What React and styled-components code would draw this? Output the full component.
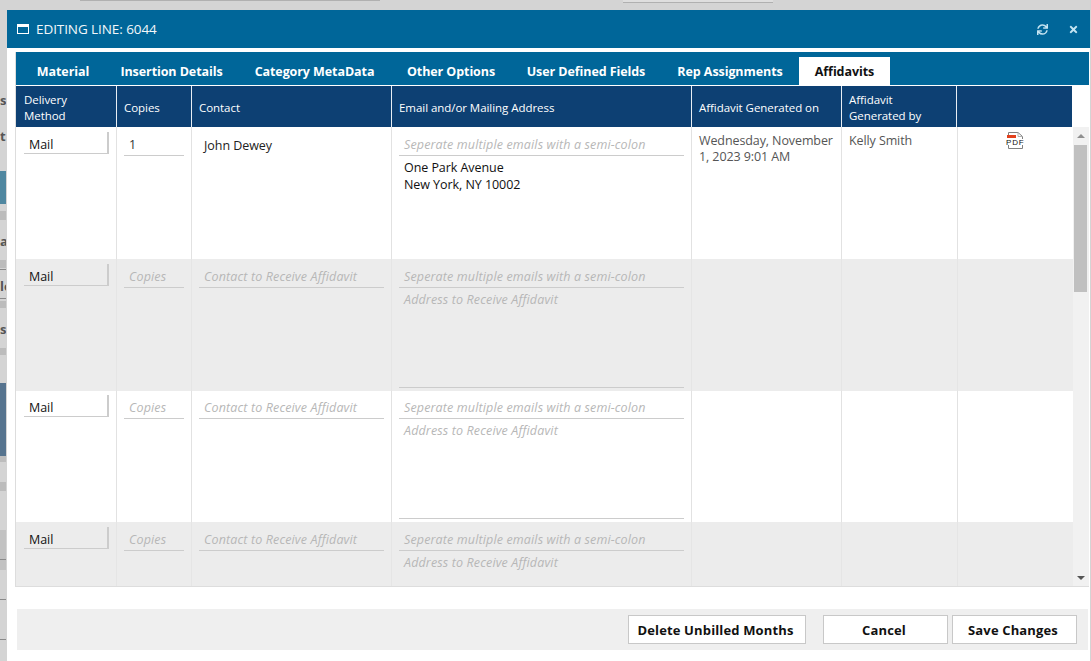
import React from "react";
import styled, { createGlobalStyle } from "styled-components";
import { FaSync, FaTimes } from "react-icons/fa";

const Global = createGlobalStyle`
  html, body { margin: 0; padding: 0; height: 100%; overflow: hidden; background: #d4d4d4; }
  #root { height: 100%; }
  * { box-sizing: border-box; }
`;

const FONT = `"Open Sans", "Noto Sans", "Liberation Sans", sans-serif`;
const COLS = "101px 75px 200px 300px 150px 116px 115px";
const HEAD_COLS = "101px 75px 200px 300px 150px 115px 115px";

const Page = styled.div`
  position: relative;
  width: 1091px;
  height: 661px;
  overflow: hidden;
  background: #d4d4d4;
  font-family: ${FONT};
  font-size: 12px;
`;

const TopRow = styled.div`
  display: flex;
  height: 3px;
  padding-left: 80px;
`;
const TopBar = styled.div`
  height: ${(p) => p.$h}px;
  width: ${(p) => p.$w}px;
  margin-right: ${(p) => p.$mr || 0}px;
  background: ${(p) => p.$bg};
  border-bottom: 1px solid #b0b0b0;
`;

const Strip = styled.div`
  position: absolute;
  left: 0;
  top: 0;
  width: 6px;
  height: 661px;
  overflow: hidden;
  display: flex;
  flex-direction: column;
`;
const StripPart = styled.div`
  flex: none;
  height: ${(p) => p.$h}px;
  background: ${(p) => p.$bg || "#d4d4d4"};
  border-bottom: ${(p) => (p.$line ? "1px solid #8a8a8a" : "none")};
  display: flex;
  align-items: center;
  font-size: 13px;
  font-weight: 700;
  color: #555;
  white-space: nowrap;
`;

const Modal = styled.div`
  position: absolute;
  left: 7px;
  top: 10px;
  width: 1083px;
  height: 651px;
  background: #fff;
  display: flex;
  flex-direction: column;
`;

const Header = styled.header`
  flex: none;
  height: 38px;
  background: #006699;
  display: flex;
  align-items: center;
  padding: 0 11px 0 10px;
  color: #fff;
`;
const Title = styled.h1`
  flex: 1;
  margin: 0 0 0 7px;
  font-size: 13.5px;
  font-weight: 400;
  color: #f2f7fa;
  letter-spacing: -0.08px;
`;
const HeadTool = styled.button`
  border: 0;
  padding: 0;
  width: 12px;
  height: 12px;
  background: none;
  color: #c4e4f2;
  display: flex;
  align-items: center;
  justify-content: center;
  margin-left: ${(p) => p.$ml || 0}px;
`;

const Panel = styled.section`
  flex: 1;
  min-height: 0;
  margin: 4px 1px 0 8px;
  border-left: 1px solid #ddd;
  border-bottom: 1px solid #ddd;
  display: flex;
  flex-direction: column;
  overflow: hidden;
`;
const Tabs = styled.nav`
  flex: none;
  height: 33px;
  margin-left: -1px;
  background: #006699;
  display: flex;
  align-items: flex-end;
  padding-left: 6px;
`;
const Tab = styled.div`
  width: ${(p) => p.$w}px;
  height: 28px;
  display: flex;
  align-items: center;
  justify-content: center;
  font-size: 12.5px;
  font-weight: 700;
  letter-spacing: -0.08px;
  white-space: nowrap;
  color: ${(p) => (p.$active ? "#111" : "#fff")};
  background: ${(p) => (p.$active ? "#fff" : "transparent")};
`;

const HeadRow = styled.div`
  flex: none;
  display: grid;
  grid-template-columns: ${HEAD_COLS};
  height: 42px;
  padding-top: 1px;
  width: 1056px;
`;
const HeadCell = styled.div`
  background: #0d4073;
  color: #fff;
  border-right: 1px solid #e8eef4;
  padding: 2px 0 0 7px;
  display: flex;
  align-items: center;
  font-size: 11.5px;
  line-height: 16px;
  letter-spacing: -0.05px;
  &:first-child { padding-left: 8px; }
  &:last-child { border-right: 0; }
`;

const Body = styled.div`
  flex: 1;
  min-height: 0;
  display: flex;
`;
const Rows = styled.div`
  width: 1057px;
  overflow: hidden;
`;
const Row = styled.div`
  display: grid;
  grid-template-columns: ${COLS};
  height: ${(p) => p.$h || 132}px;
  background: ${(p) => (p.$alt ? "#ececec" : "#fff")};
`;
const Cell = styled.div`
  border-right: 1px solid ${(p) => (p.$alt ? "#e5e5e5" : "#e2e2e2")};
  padding: ${(p) => (p.$flush ? 0 : 1)}px 0 0 7px;
  min-width: 0;
  &:first-child { padding-left: 8px; }
  &:last-child { border-right: 0; }
`;
const SelectBox = styled.div`
  width: 85px;
  height: 22px;
  margin-top: 4px;
  padding: 2px 0 0 5px;
  border-right: 2px solid #ccc;
  border-bottom: 1px solid #ccc;
  color: #111;
  font-size: 12.5px;
  line-height: 21px;
  letter-spacing: -0.05px;
`;
const LineField = styled.div`
  width: ${(p) => p.$w}px;
  height: 24px;
  margin-top: 4px;
  padding: 5px 0 0 5px;
  border-bottom: 1px solid #ccc;
  font-size: 12.5px;
  line-height: 16px;
  letter-spacing: ${(p) => (p.$ph ? "0.14px" : "-0.05px")};
  white-space: nowrap;
  color: ${(p) => (p.$ph ? "#b7b7b7" : "#333")};
  font-style: ${(p) => (p.$ph ? "italic" : "normal")};
`;
const PlainField = styled.div`
  padding: 10px 0 0 5px;
  font-size: 12.5px;
  line-height: 16px;
  letter-spacing: -0.05px;
  color: #222;
`;
const AreaField = styled.div`
  width: 285px;
  height: 100px;
  padding: 3px 0 0 5px;
  border-bottom: 1px solid ${(p) => (p.$empty ? "#ccc" : "transparent")};
  font-size: 12.5px;
  line-height: 17px;
  letter-spacing: ${(p) => (p.$empty ? "0.14px" : "-0.06px")};
  color: ${(p) => (p.$empty ? "#b7b7b7" : "#111")};
  font-style: ${(p) => (p.$empty ? "italic" : "normal")};
`;
const Info = styled.div`
  padding: 5px 6px 0 0;
  font-size: 12.5px;
  line-height: 16px;
  letter-spacing: -0.1px;
  color: #555;
`;
const IconSlot = styled.div`
  display: flex;
  justify-content: center;
  padding: 4px 8px 0 0;
`;

const Scrollbar = styled.div`
  width: 16px;
  background: #f1f1f1;
  display: flex;
  flex-direction: column;
  align-items: center;
`;
const ArrowSlot = styled.div`
  flex: none;
  height: ${(p) => p.$h}px;
  display: flex;
  align-items: center;
  justify-content: center;
  width: 100%;
`;
const Arrow = styled.div`
  width: 0;
  height: 0;
  border-left: 4px solid transparent;
  border-right: 4px solid transparent;
  border-bottom: ${(p) => (p.$down ? "0" : "4px solid #8f8f8f")};
  border-top: ${(p) => (p.$down ? "4px solid #555" : "0")};
`;
const Thumb = styled.div`
  flex: none;
  width: 13px;
  height: 147px;
  margin-right: 2px;
  background: #c0c0c0;
`;
const Track = styled.div`
  flex: 1;
`;

const Footer = styled.footer`
  flex: none;
  height: 41px;
  margin: 22px 2px 11px 10px;
  background: #efefef;
  display: flex;
  align-items: center;
  justify-content: flex-end;
  padding-right: 11px;
`;
const Button = styled.button`
  width: ${(p) => p.$w}px;
  height: 29px;
  margin-left: ${(p) => p.$ml || 0}px;
  border: 1px solid #c8c8c8;
  background: #fff;
  color: #111;
  font-family: ${FONT};
  font-size: 13px;
  font-weight: 700;
  letter-spacing: 0.14px;
  padding: 1px 3px 0 0;
`;

const WindowIcon = () => (
  <svg width="12" height="10" viewBox="0 0 12 10">
    <rect x="0.5" y="0.5" width="11" height="9" fill="none" stroke="#fff" />
    <rect x="0" y="0" width="12" height="3" fill="#fff" />
  </svg>
);

const PdfIcon = () => (
  <svg width="19" height="17" viewBox="0 0 19 17">
    <path d="M2.5 3V0.5H12L16.5 4.5V7M16.5 13V16.5H2.5V13" fill="none" stroke="#808080" />
    <path d="M12 0.5V4.5H16.5" fill="none" stroke="#b0b0b0" />
    <rect x="1" y="3" width="9" height="3" fill="#e2401c" />
    <text x="0" y="13" fontFamily="Liberation Sans, sans-serif" fontSize="8" letterSpacing="0.8" fill="#111">PDF</text>
  </svg>
);

const leftParts = [
  { h: 93 }, { h: 14, t: "sa" }, { h: 22 }, { h: 14, t: "t" }, { h: 28 },
  { h: 33, bg: "#4f87a0" }, { h: 7 }, { h: 9, bg: "#bcbcbc" }, { h: 14 },
  { h: 14, t: "ar" }, { h: 12 }, { h: 8, bg: "#bcbcbc" }, { h: 2, line: 1 },
  { h: 9 }, { h: 14, t: "le" }, { h: 6, line: 1 }, { h: 2 }, { h: 7, bg: "#bcbcbc" }, { h: 14 },
  { h: 14, t: "s" }, { h: 12 }, { h: 7, bg: "#bcbcbc" }, { h: 28 },
  { h: 73, bg: "#56748f" }, { h: 6, bg: "#bdbdbd" }, { h: 20 }, { h: 9, bg: "#bcbcbc" },
  { h: 39 }, { h: 30, bg: "#c2c2c2", line: 1 }, { h: 10, bg: "#c2c2c2" }, { h: 30, line: 1 },
  { h: 40, line: 1 }, { h: 21 },
];

const headers = [
  <>Delivery<br />Method</>, "Copies", "Contact", "Email and/or Mailing Address",
  "Affidavit Generated on", <>Affidavit<br />Generated by</>, "",
];

const tabs = [
  ["Material", 84], ["Insertion Details", 133], ["Category MetaData", 153],
  ["Other Options", 120], ["User Defined Fields", 150], ["Rep Assignments", 138],
];

const EMAIL_PH = "Seperate multiple emails with a semi-colon";

const EmptyRow = ({ alt, h, flush }) => (
  <Row $alt={alt} $h={h}>
    <Cell $alt={alt} $flush={flush}><SelectBox>Mail</SelectBox></Cell>
    <Cell $alt={alt} $flush={flush}><LineField $w={60} $ph>Copies</LineField></Cell>
    <Cell $alt={alt} $flush={flush}><LineField $w={185} $ph>Contact to Receive Affidavit</LineField></Cell>
    <Cell $alt={alt} $flush={flush}>
      <LineField $w={285} $ph>{EMAIL_PH}</LineField>
      <AreaField $empty>Address to Receive Affidavit</AreaField>
    </Cell>
    <Cell $alt={alt} />
    <Cell $alt={alt} />
    <Cell $alt={alt} />
  </Row>
);

export default function App() {
  return (
    <Page>
      <Global />
      <TopRow>
        <TopBar $w={300} $h={1} $mr={243} $bg="#c4c4c4" />
        <TopBar $w={150} $h={3} $bg="#dedede" />
      </TopRow>
      <Strip>
        {leftParts.map((p, i) => (
          <StripPart key={i} $h={p.h} $bg={p.bg} $line={p.line}>{p.t}</StripPart>
        ))}
      </Strip>
      <Modal>
        <Header>
          <WindowIcon />
          <Title>EDITING LINE: 6044</Title>
          <HeadTool aria-label="Refresh"><FaSync size={11} /></HeadTool>
          <HeadTool aria-label="Close" $ml={19}><FaTimes size={11} /></HeadTool>
        </Header>
        <Panel>
          <Tabs>
            {tabs.map(([label, w]) => (
              <Tab key={label} $w={w}>{label}</Tab>
            ))}
            <Tab $w={91} $active>Affidavits</Tab>
          </Tabs>
          <HeadRow>
            {headers.map((h, i) => (
              <HeadCell key={i}><span>{h}</span></HeadCell>
            ))}
          </HeadRow>
          <Body>
            <Rows>
              <Row>
                <Cell><SelectBox>Mail</SelectBox></Cell>
                <Cell><LineField $w={60}>1</LineField></Cell>
                <Cell><PlainField>John Dewey</PlainField></Cell>
                <Cell>
                  <LineField $w={285} $ph>{EMAIL_PH}</LineField>
                  <AreaField>One Park Avenue<br />New York, NY 10002</AreaField>
                </Cell>
                <Cell><Info>Wednesday, November 1, 2023 9:01 AM</Info></Cell>
                <Cell><Info>Kelly Smith</Info></Cell>
                <Cell><IconSlot><PdfIcon /></IconSlot></Cell>
              </Row>
              <EmptyRow alt />
              <EmptyRow h={131} flush />
              <EmptyRow alt />
            </Rows>
            <Scrollbar>
              <ArrowSlot $h={18}><Arrow /></ArrowSlot>
              <Thumb />
              <Track />
              <ArrowSlot $h={17}><Arrow $down /></ArrowSlot>
            </Scrollbar>
          </Body>
        </Panel>
        <Footer>
          <Button $w={178}>Delete Unbilled Months</Button>
          <Button $w={125} $ml={17}>Cancel</Button>
          <Button $w={125} $ml={4}>Save Changes</Button>
        </Footer>
      </Modal>
    </Page>
  );
}
